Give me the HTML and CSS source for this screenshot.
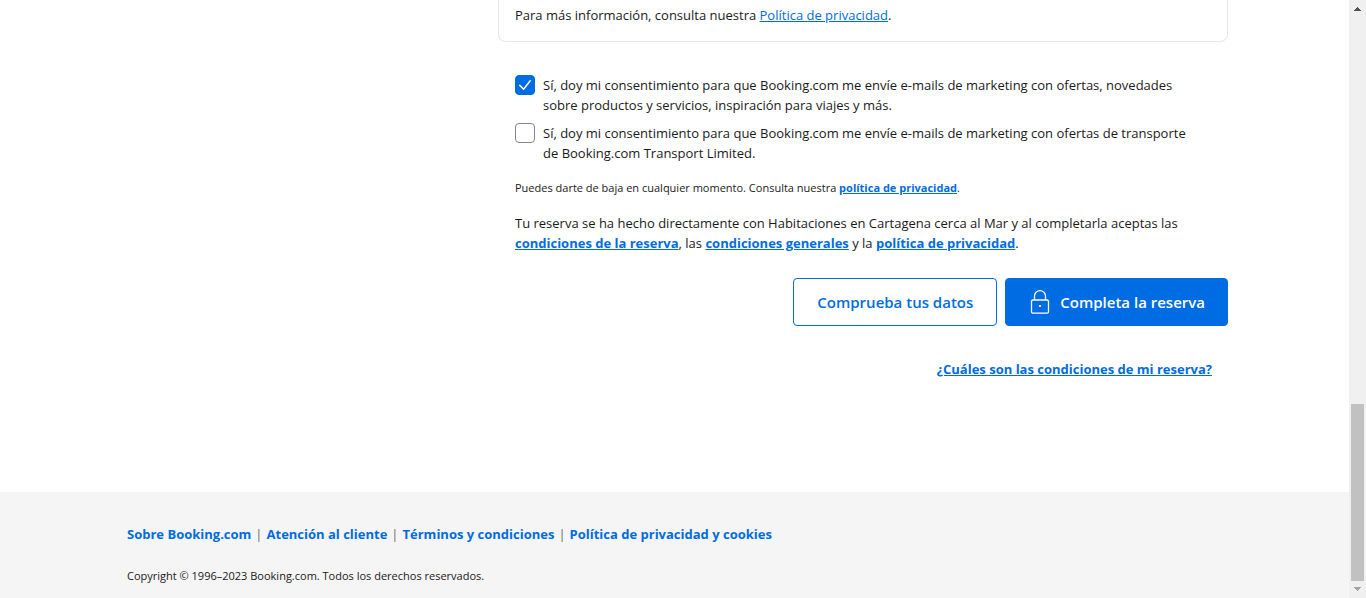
FILE: index.html
```html
<!DOCTYPE html>
<html lang="es">
<head>
<meta charset="utf-8">
<meta name="viewport" content="width=device-width, initial-scale=1">
<title>Completa la reserva</title>
<link rel="stylesheet" href="styles.css">
</head>
<body>
<div class="window">
  <div class="page">
    <main class="main">
      <div class="column">
        <section class="card">
          <p class="text">Para más información, consulta nuestra <a class="link" href="#privacidad">Política de privacidad</a>.</p>
        </section>
        <form class="booking">
          <div class="consents">
            <label class="consent">
              <input class="checkbox" type="checkbox" checked>
              <svg class="tick" viewBox="0 0 20 20" aria-hidden="true"><path d="M4.8 10.4 8.6 14.2 15.2 5.8"/></svg>
              <span>Sí, doy mi consentimiento para que Booking.com me envíe e-mails de marketing con ofertas, novedades sobre productos y servicios, inspiración para viajes y más.</span>
            </label>
            <label class="consent">
              <input class="checkbox" type="checkbox">
              <svg class="tick" viewBox="0 0 20 20" aria-hidden="true"><path d="M4.8 10.4 8.6 14.2 15.2 5.8"/></svg>
              <span>Sí, doy mi consentimiento para que Booking.com me envíe e-mails de marketing con ofertas de transporte de Booking.com Transport Limited.</span>
            </label>
          </div>
          <p class="note">Puedes darte de baja en cualquier momento. Consulta nuestra <a class="link strong" href="#privacidad">política de privacidad</a>.</p>
          <p class="text">Tu reserva se ha hecho directamente con Habitaciones en Cartagena cerca al Mar y al completarla aceptas las <a class="link strong" href="#reserva">condiciones de la reserva</a>, las <a class="link strong" href="#generales">condiciones generales</a> y la <a class="link strong" href="#privacidad">política de privacidad</a>.</p>
        </form>
        <div class="actions">
          <button class="button secondary" type="button">Comprueba tus datos</button>
          <button class="button primary" type="button">
            <svg class="lock" viewBox="0 0 24 24" aria-hidden="true"><rect x="3.5" y="10" width="17" height="13.2" rx="1.5"/><path d="M6.5 10V6a5.5 5.3 0 0 1 11 0v4"/><circle class="dot" cx="12" cy="16" r="1.1"/></svg>
            <span>Completa la reserva</span>
          </button>
        </div>
        <p class="conditions"><a class="link strong" href="#condiciones">¿Cuáles son las condiciones de mi reserva?</a></p>
      </div>
    </main>
    <footer class="footer">
      <div class="footer-inner">
        <nav class="footer-nav">
          <a href="#sobre">Sobre Booking.com</a><span class="bar">|</span><a href="#atencion">Atención al cliente</a><span class="bar">|</span><a href="#terminos">Términos y condiciones</a><span class="bar">|</span><a href="#cookies">Política de privacidad y cookies</a>
        </nav>
        <p class="copyright">Copyright © 1996–2023 Booking.com. Todos los derechos reservados.</p>
      </div>
    </footer>
  </div>
  <div class="scrollbar" aria-hidden="true">
    <svg class="arrow" viewBox="0 0 17 17"><path d="M8 7h1v1h1v1h1v1h1v1H5v-1h1V9h1V8h1z" fill="#505050"/></svg>
    <div class="track"><div class="thumb"></div></div>
    <svg class="arrow" viewBox="0 0 17 17"><path d="M5 6h7v1h-1v1h-1v1H9v1H8V9H7V8H6V7H5z" fill="#a3a3a3"/></svg>
  </div>
</div>
</body>
</html>
```
FILE: styles.css
```css
* {
  box-sizing: border-box;
}

body {
  margin: 0;
  background: #fff;
  color: #1a1a1a;
  font-family: "Open Sans", "Noto Sans", sans-serif;
  font-size: 13px;
  line-height: 20px;
}

p {
  margin: 0;
}

.window {
  display: flex;
  min-height: 100vh;
}

.page {
  flex: 1;
  display: flex;
  flex-direction: column;
}

.main {
  flex: 1;
  width: 100%;
  max-width: 1107px;
  margin: 0 auto;
  display: flex;
  justify-content: flex-end;
}

.column {
  width: 100%;
  max-width: 730px;
}

.card {
  padding: 5px 16px 16px;
  border: 1px solid #e7e7e7;
  border-top: 0;
  border-radius: 0 0 8px 8px;
}

.booking {
  display: flex;
  flex-direction: column;
  gap: 15px;
  padding: 33px 16px 0 17px;
}

.consents {
  display: flex;
  flex-direction: column;
  gap: 8px;
  padding-right: 10px;
}

.consent {
  display: grid;
  grid-template-columns: 20px 1fr;
  column-gap: 8px;
}

.checkbox,
.tick {
  grid-area: 1 / 1;
  width: 20px;
  height: 20px;
  margin: 0;
}

.checkbox {
  appearance: none;
  border: 1px solid #868686;
  border-radius: 4px;
  background: #fff;
}

.checkbox:checked {
  border-color: #006ce4;
  background: #006ce4;
}

.tick {
  fill: none;
  stroke: #fff;
  stroke-width: 1.5;
  stroke-linecap: round;
  stroke-linejoin: round;
  pointer-events: none;
}

.note {
  font-size: 11px;
  line-height: 20px;
}

.link {
  color: #006ce4;
  text-decoration: underline;
}

.strong {
  font-weight: 700;
}

.actions {
  display: flex;
  justify-content: flex-end;
  gap: 8px;
  margin-top: 25px;
}

.button {
  display: flex;
  align-items: center;
  justify-content: center;
  gap: 8px;
  height: 48px;
  padding: 0 23px;
  border: 1px solid #006ce4;
  border-radius: 4px;
  font-family: inherit;
  font-size: 15px;
  font-weight: 600;
  line-height: 24px;
}

.secondary {
  background: #fff;
  color: #006ce4;
}

.primary {
  padding: 0 22px;
  background: #006ce4;
  color: #fff;
}

.lock {
  width: 24px;
  height: 24px;
  fill: none;
  stroke: #fff;
  stroke-width: 1.3;
}

.dot {
  fill: #fff;
  stroke: none;
}

.conditions {
  padding: 33px 16px 32px;
  text-align: right;
}

.footer {
  padding: 32px 0 13px;
  background: #f5f5f5;
}

.footer-inner {
  max-width: 1107px;
  margin: 0 auto;
  padding: 0 6px;
}

.footer-nav {
  display: flex;
  flex-wrap: wrap;
  gap: 4px;
}

.footer-nav a {
  color: #006ce4;
  font-weight: 700;
  text-decoration: none;
}

.bar {
  color: #6b6b6b;
}

.copyright {
  margin-top: 23px;
  font-size: 11px;
  line-height: 18px;
}

.scrollbar {
  display: flex;
  flex-direction: column;
  width: 17px;
  background: #f0f0f0;
}

.arrow {
  width: 17px;
  height: 17px;
}

.track {
  flex: 1;
  display: flex;
  flex-direction: column;
  justify-content: flex-end;
  padding: 0 2px;
}

.thumb {
  height: 31.4%;
  background: #c1c1c1;
}
```
